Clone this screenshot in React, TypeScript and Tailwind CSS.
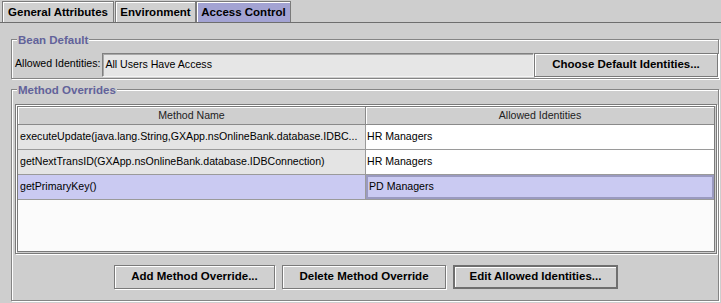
import React from 'react';

const font = "font-['Liberation_Sans',Arial,sans-serif]";

const etched = 'border border-[#858585] shadow-[inset_1px_1px_0_#fff,1px_1px_0_#fff]';

const rows = [
  { method: 'executeUpdate(java.lang.String,GXApp.nsOnlineBank.database.IDBC...', ids: 'HR Managers', h: 'h-[25px]' },
  { method: 'getNextTransID(GXApp.nsOnlineBank.database.IDBConnection)', ids: 'HR Managers', h: 'h-[25px]' },
  { method: 'getPrimaryKey()', ids: 'PD Managers', h: 'h-[25px]', selected: true },
];

function Tab({ label, active, className }: { label: string; active?: boolean; className: string }) {
  return (
    <div
      className={`h-[21px] flex items-center justify-center pt-[1px] border border-b-0 border-[#7a7a7a] text-[11.5px] font-bold shadow-[inset_1px_1px_0_#fff] ${
        active ? 'bg-[#a3a3d3]' : 'bg-[#d0d0d0]'
      } ${className}`}
    >
      {label}
    </div>
  );
}

function Button({ label, width, isDefault }: { label: string; width: string; isDefault?: boolean }) {
  return (
    <button
      className={`h-[24px] ${width} bg-[#d0d0d0] text-[11.5px] font-bold text-black ${
        isDefault
          ? 'border-2 border-[#6f6f6f] shadow-[inset_1px_1px_0_#fff]'
          : 'border border-[#7a7a7a] shadow-[inset_1px_1px_0_#fff,1px_1px_0_#fff]'
      }`}
    >
      {label}
    </button>
  );
}

function GroupTitle({ text }: { text: string }) {
  return (
    <span className="absolute left-[5px] top-[-7px] bg-[#cecece] px-[1px] text-[11.5px] font-bold leading-[14px] text-[#62629a]">
      {text}
    </span>
  );
}

export default function App() {
  return (
    <div className={`w-[721px] h-[303px] overflow-hidden bg-[#cecece] text-[10.6px] text-black ${font}`}>
      <div className="h-[23px] flex items-end border-b border-[#6e6e6e]">
        <Tab label="General Attributes" className="ml-[2px] w-[112px]" />
        <Tab label="Environment" className="ml-[1px] w-[81px]" />
        <Tab label="Access Control" active className="w-[95px]" />
      </div>

      <div className={`relative ml-[11px] mt-[16px] w-[708px] h-[40px] ${etched} flex items-end pb-[1px] pl-[3px]`}>
        <GroupTitle text="Bean Default" />
        <span className="mr-[2px] mb-[5px]">Allowed Identities:</span>
        <div className="flex-1 h-[24px] flex items-center bg-[#e6e6e6] border border-[#808080] border-r-[#f4f4f4] border-b-[#f4f4f4] shadow-[inset_1px_1px_0_#a8a8a8] pl-[2px]">
          All Users Have Access
        </div>
        <Button label="Choose Default Identities..." width="w-[184px]" />
      </div>

      <div className={`relative ml-[11px] mt-[10px] w-[708px] h-[212px] ${etched} flex flex-col pt-[14px] pl-[3px] pr-[1px]`}>
        <GroupTitle text="Method Overrides" />
        <div className="h-[150px] border border-[#7a7a7a] shadow-[inset_1px_1px_0_#fff,1px_1px_0_#fff] p-[1px]">
          <div className="h-full border border-[#7a7a7a] bg-[#fbfbfb] flex flex-col">
            <div className="h-[18px] flex bg-[#cfcfcf] border-b border-[#8a8a8a] text-[#222]">
              <div className="w-[348px] flex items-center justify-center border-r border-[#8a8a8a] shadow-[inset_1px_1px_0_#fff]">
                Method Name
              </div>
              <div className="flex-1 flex items-center justify-center shadow-[inset_1px_1px_0_#fff]">
                Allowed Identities
              </div>
            </div>
            {rows.map((r) => (
              <div key={r.method} className={`${r.h} flex border-b border-[#9a9a9a]`}>
                <div
                  className={`w-[348px] flex items-center pl-[2px] border-r border-[#9a9a9a] whitespace-nowrap overflow-hidden ${
                    r.selected ? 'bg-[#cacaf2]' : 'bg-[#e4e4e4]'
                  }`}
                >
                  {r.method}
                </div>
                <div
                  className={`flex-1 flex items-center pl-[1px] ${
                    r.selected ? 'bg-[#cacaf2] border-2 border-[#9a9ac0]' : 'bg-white'
                  }`}
                >
                  {r.ids}
                </div>
              </div>
            ))}
          </div>
        </div>
        <div className="mt-[11px] flex justify-center gap-[7px]">
          <Button label="Add Method Override..." width="w-[161px]" />
          <Button label="Delete Method Override" width="w-[164px]" />
          <Button label="Edit Allowed Identities..." width="w-[165px]" isDefault />
        </div>
      </div>
    </div>
  );
}
